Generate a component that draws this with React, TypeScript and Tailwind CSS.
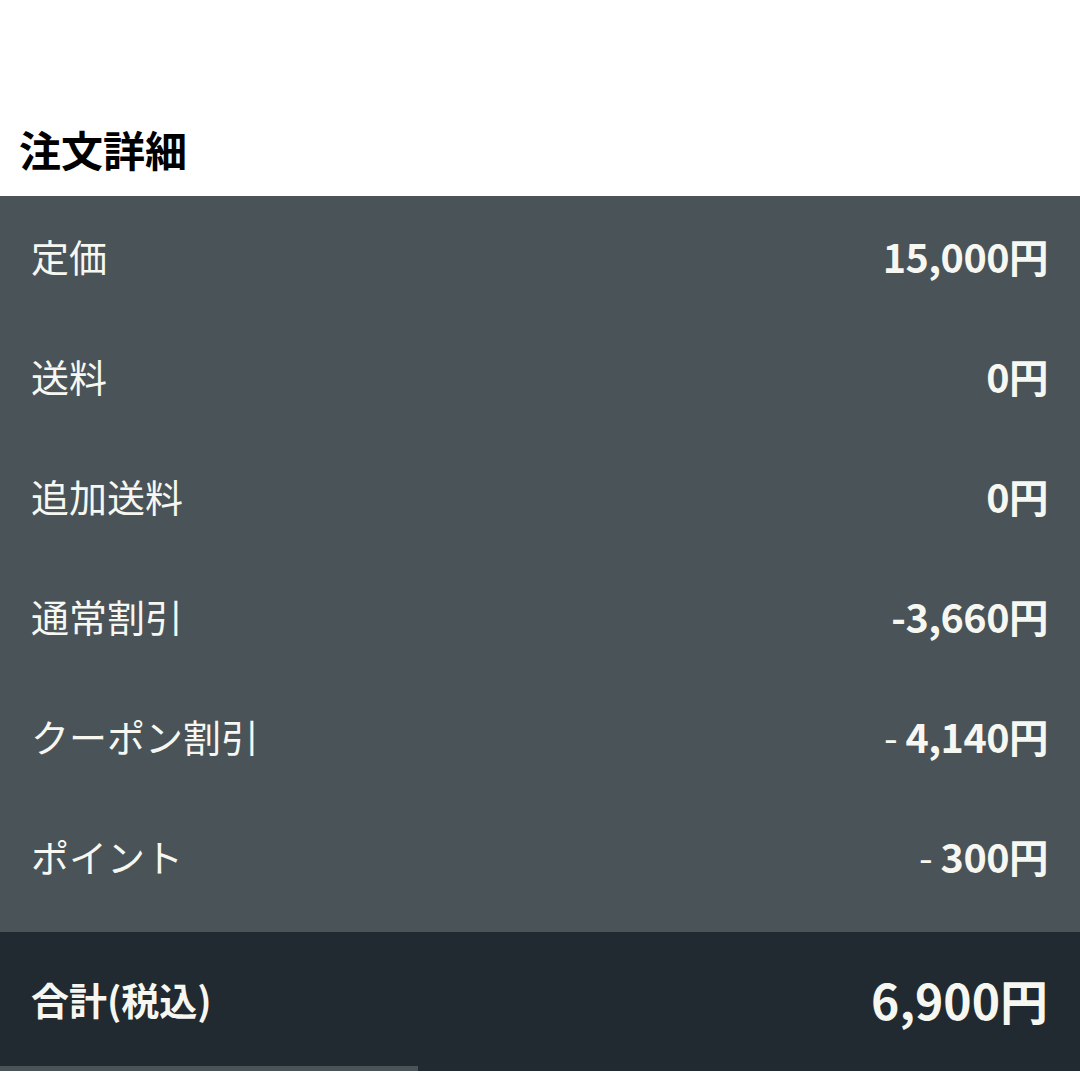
import React from "react";

const rows: { label: string; value: React.ReactNode }[] = [
  { label: "定価", value: "15,000円" },
  { label: "送料", value: "0円" },
  { label: "追加送料", value: "0円" },
  { label: "通常割引", value: "-3,660円" },
  {
    label: "クーポン割引",
    value: (
      <>
        <span className="font-normal">- </span>4,140円
      </>
    ),
  },
  {
    label: "ポイント",
    value: (
      <>
        <span className="font-normal">- </span>300円
      </>
    ),
  },
];

export default function App() {
  return (
    <div
      className="w-[1080px] h-[1080px] bg-white overflow-hidden"
      style={{ fontFamily: '"Noto Sans CJK JP", "Noto Sans", sans-serif' }}
    >
      <div className="h-[196px] flex items-end pb-[26px] pl-[19px]">
        <h1 className="text-[42px] font-bold text-black leading-none">注文詳細</h1>
      </div>
      <div className="bg-[#4a5357] pt-0 pb-[16px]">
        {rows.map((r) => (
          <div
            key={r.label}
            className="h-[120px] flex items-center justify-between pl-[31px] pr-[32px] text-[#f7f7f2]"
          >
            <span className="text-[38px] leading-none">{r.label}</span>
            <span className="text-[39.5px] font-bold leading-none tracking-[-0.5px]">{r.value}</span>
          </div>
        ))}
      </div>
      <div className="bg-[#212a31] h-[134px] flex items-center justify-between pl-[31px] pr-[32px] text-[#f7f7f2]">
        <span className="text-[38px] font-bold leading-none">合計(税込)</span>
        <span className="text-[48px] font-bold leading-none">6,900円</span>
      </div>
      <div className="h-[5px] bg-[#212a31] flex">
        <div className="w-[418px] bg-[#4a5357]" />
      </div>
    </div>
  );
}
